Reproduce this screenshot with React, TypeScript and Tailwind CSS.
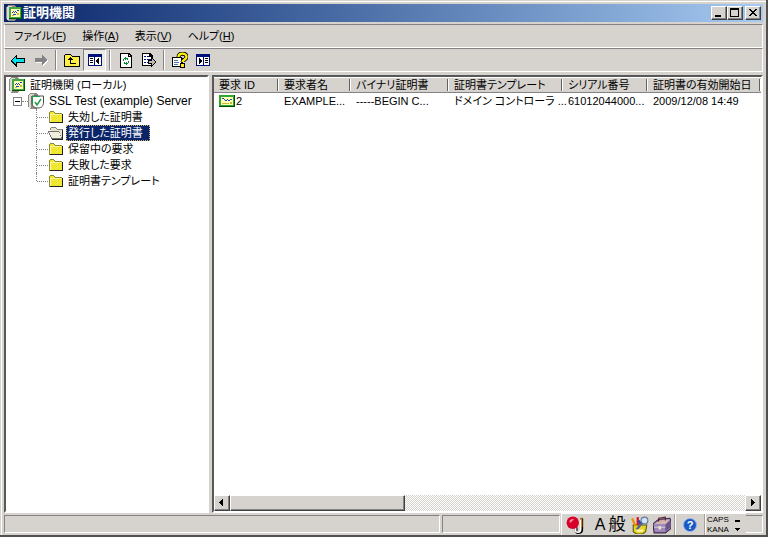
import type { ReactNode } from "react";

const raised =
  "border border-t-white border-l-white border-r-[#404040] border-b-[#404040] shadow-[inset_-1px_-1px_0_#848284]";
const sunken =
  "border-2 border-t-[#585858] border-l-[#585858] border-r-white border-b-white";

function Icon({ children, size = 16 }: { children: ReactNode; size?: number }) {
  return (
    <svg
      width={size}
      height={size}
      viewBox="0 0 16 16"
      shapeRendering="crispEdges"
      className="block shrink-0"
      aria-hidden="true"
    >
      {children}
    </svg>
  );
}

function AuthorityIcon() {
  return (
    <Icon>
      <path d="M0 2l2-2h6l2 2v12l-2 2H2l-2-2z" fill="#8c8a84" />
      <path d="M1 2l1-1h4v2H3v12H1z" fill="#dedbd6" />
      <path d="M3 2h13v12H3z" fill="#005900" />
      <path d="M3 2h12v11H3z" fill="#42a642" />
      <path d="M5 4h9v8H5z" fill="#ffffb5" />
      <path d="M6 7h1v1H6zM7 6h1v1H7zM8 7h1v1H8zM9 6h1v1H9zM11 5h2v1h-2zM10 7h1v1h-1zM7 9h3v1H7z" fill="#2145b5" />
      <path d="M6 10h2v1H6zM11 8h2v2h-2z" fill="#d6b531" />
    </Icon>
  );
}

function ServerIcon() {
  return (
    <Icon>
      <path d="M0 2l2-2h6l2 2v12l-2 2H2l-2-2z" fill="#8c8a84" />
      <path d="M1 2l1-1h4v2H3v12H1z" fill="#dedbd6" />
      <path
        d="M4 3h11.5v6c0 4-2 6-5.500 6S4 13 4 10z"
        fill="#fff"
        stroke="#4a4d4a"
        shapeRendering="auto"
      />
      <path d="M4 11V3h8" fill="none" stroke="#219a4a" />
      <path d="M7 9l2 3 4-6" fill="none" stroke="#219a42" strokeWidth="1.5" shapeRendering="auto" />
    </Icon>
  );
}

function FolderIcon({ open = false }: { open?: boolean }) {
  return (
    <Icon>
      {open ? (
        <>
          <path d="M2 3h1V2h5v1h1v1h6v10H5z" fill="#848284" />
          <path d="M3 3h5v1h1v1h5v7H3z" fill="#e7e3c6" />
          <path d="M0 6h11v1h1v3h1v2h1v2H3v-2H2v-2H1V8H0z" fill="#737173" />
          <path d="M1 7h10v1h1v3h1v2H4v-1H3v-2H2V8H1z" fill="#efefde" />
          <path d="M14 5h1v9h-1zM4 14h11v1H4z" fill="#212421" />
        </>
      ) : (
        <>
          <path d="M1 3h1V2h4v1h1v1h7v10H1z" fill="#8c8a39" />
          <path d="M2 3h4v1h1v1h7v8H2z" fill="#efe731" />
          <path d="M2 5h11v1H3v7H2z" fill="#fff7a5" />
          <path d="M14 5h1v9H2v-1h12z" fill="#212421" />
        </>
      )}
    </Icon>
  );
}

function CertificateIcon() {
  return (
    <Icon>
      <path d="M0 2h16v12H0z" fill="#004900" />
      <path d="M0 2h15v11H0z" fill="#31a631" />
      <path d="M2 4h12v8H2z" fill="#ffffb5" />
      <path d="M3 5h2v1H3zM5 6h1v1H5zM6 7h2v1H6zM8 6h1v1H8zM9 7h2v1H9zM11 6h2v1h-2z" fill="#2145b5" />
      <path d="M3 10h7v1H3zM11 9h2v2h-2z" fill="#d6b531" />
    </Icon>
  );
}

function BackIcon() {
  return (
    <Icon>
      <path d="M7 2v4h8v5H7v4H6v-1H5v-1H4v-1H3v-1H2v-1H1V8h1V7h1V6h1V5h1V4h1V3z" fill="#000" />
      <path d="M6 5v2h8v3H6v2H5v-1H4v-1H3V9H2V8h1V7h1V6h1V5z" fill="#00e3ef" />
    </Icon>
  );
}

function ForwardIcon() {
  return (
    <Icon>
      <path d="M10 4h1v1h1v1h1v1h1v1h1v2h-1v1h-1v1h-1v1h-1v1h-1v-3H3v-1h7z" fill="#fff" />
      <path d="M9 3h1v1h1v1h1v1h1v1h1v2h-1v1h-1v1h-1v1h-1v1H9v-3H2V6h7z" fill="#848284" />
    </Icon>
  );
}

function UpIcon() {
  return (
    <Icon>
      <path d="M1 2h6v1h1v1h8v11H0V3h1z" fill="#000" />
      <path d="M1 3h6v1h1v1h7v9H1z" fill="#ffef42" />
      <path d="M6 5h1v1h1v1h1v1H7v3h5v1H6V8H4V7h1V6h1z" fill="#000" />
    </Icon>
  );
}

function TreePaneIcon() {
  return (
    <Icon>
      <path d="M1 2h14v12H1z" fill="#00107b" />
      <path d="M2 5h5v8H2zM8 5h6v8H8z" fill="#fff" />
      <path d="M3 6h3v1H3zM3 8h3v1H3zM3 10h3v1H3z" fill="#000" />
      <path d="M12 6v6h-1v-1h-1v-1H9V8h1V7h1V6z" fill="#000" />
    </Icon>
  );
}

function ActionPaneIcon() {
  return (
    <Icon>
      <path d="M1 2h14v12H1z" fill="#00107b" />
      <path d="M2 5h6v8H2zM9 5h5v8H9z" fill="#fff" />
      <path d="M10 6h3v1h-3zM10 8h3v1h-3zM10 10h3v1h-3z" fill="#000" />
      <path d="M4 6h1v1h1v1h1v2H6v1H5v1H4z" fill="#000" />
    </Icon>
  );
}

function RefreshIcon() {
  return (
    <Icon>
      <path d="M2 1h9l3 3v12H2z" fill="#000" />
      <path d="M3 2h7v3h3v10H3z" fill="#fff" />
      <path d="M11 3h1v1h-1z" fill="#fff" />
      <path d="M8 5v1h2v2H9V7H8v1H7V7H6v2H5V7h1V6h1V5zM10 9h1v2h-1v1H9v1H8v-1H6v-2h1v1h1v-1h1v1h1z" fill="#008a31" />
    </Icon>
  );
}

function ExportIcon() {
  return (
    <Icon>
      <path d="M1 1h8l3 3v10H1z" fill="#000" />
      <path d="M2 2h6v3h3v8H2z" fill="#fff" />
      <path d="M3 4h2v1H3zM3 7h2v1H3zM3 10h2v1H3z" fill="#00107b" />
      <path d="M6 4h2v1H6zM6 7h4v1H6zM6 10h3v1H6z" fill="#00107b" />
      <path d="M10 5h1v1h1v1h1v1h1v1h1v2h-1v1h-1v1h-1v1h-1v1h-1v-3H7V8h3z" fill="#000" />
      <path d="M11 7v2H8v2h3v2h1v-1h1v-1h1V9h-1V8h-1V7z" fill="#bdbab5" />
    </Icon>
  );
}

function HelpIcon() {
  return (
    <Icon>
      <path d="M0 5h9l2 2v8H0z" fill="#000" />
      <path d="M1 6h8v8H1z" fill="#fff" />
      <path d="M2 8h4v1H2zM2 10h5v1H2zM2 12h4v1H2z" fill="#52759c" />
      <path
        d="M6.5 5c0-4.5 8-4.5 8 0 0 3-4 2.5-4 5"
        fill="none"
        stroke="#000"
        strokeWidth="4"
        shapeRendering="auto"
      />
      <path
        d="M6.5 5c0-4.5 8-4.5 8 0 0 3-4 2.5-4 5"
        fill="none"
        stroke="#ffef00"
        strokeWidth="2.4"
        shapeRendering="auto"
      />
      <path d="M8 11h5v5H8z" fill="#000" />
      <path d="M9 12h3v3H9z" fill="#ffef00" />
    </Icon>
  );
}

function ImeIcon() {
  return (
    <Icon size={18}>
      <g shapeRendering="auto">
        <path d="M9 10v3c0 2.5 5 2.5 5-1V2" fill="none" stroke="#000" strokeWidth="2.5" />
        <path d="M8.5 10v3c0 2 4.500 2 4.500-1V3" fill="none" stroke="#fff" strokeWidth="1.5" />
        <path d="M14 1v9" stroke="#ef8a10" />
        <circle cx="6" cy="6" r="5.5" fill="#d6002a" />
        <path d="M3 5c0-2 3-3 4-2L4 6z" fill="#ff8494" />
      </g>
    </Icon>
  );
}

function ImePadIcon() {
  return (
    <Icon size={18}>
      <g shapeRendering="auto">
        <path d="M2 8h12l-1 6-3 2H5l-3-2z" fill="#e7d329" stroke="#635d08" />
        <path d="M1 2l3 7" stroke="#e79200" strokeWidth="2" />
        <path d="M6 1v7" stroke="#d61021" strokeWidth="2" />
        <path d="M9 8L7 4" stroke="#2145b5" strokeWidth="2" />
        <circle cx="12" cy="4" r="3" fill="#cee3f7" stroke="#63799c" />
        <path d="M10 6l-5 6" stroke="#52658c" strokeWidth="2" />
        <path d="M5 13h6" stroke="#fff7a5" strokeWidth="2" />
      </g>
    </Icon>
  );
}

function ToolboxIcon() {
  return (
    <Icon size={18}>
      <g shapeRendering="auto">
        <path d="M0 7l5-4 10-1 1 3v6l-5 4H1z" fill="#9c8abd" stroke="#42294a" />
        <path d="M1 7l5-3 9-1-4 4z" fill="#d6b5ad" />
        <path d="M11 8l4-4v6l-4 4z" fill="#6b5184" />
        <path d="M5 5V2l6-1v3" fill="none" stroke="#632931" />
        <path d="M1 10h10" stroke="#d6c6de" />
        <path d="M5 9h2v3H5z" fill="#f7e7b5" />
      </g>
    </Icon>
  );
}

function CaptionGlyph({ d }: { d: string }) {
  return (
    <svg width="10" height="10" viewBox="0 0 10 10" shapeRendering="crispEdges" aria-hidden="true">
      <path d={d} fill="#000" />
    </svg>
  );
}

const captionButton = `flex h-[14px] w-4 items-center justify-center bg-[#d6d3ce] ${raised}`;

function TitleBar() {
  return (
    <header className="flex h-[18px] shrink-0 items-center bg-linear-to-r from-[#0a246a] to-[#a6caf0] px-[2px]">
      <AuthorityIcon />
      <h1 className="ml-px flex-1 text-[13px] font-bold text-white">証明機関</h1>
      <button className={captionButton} aria-label="最小化">
        <CaptionGlyph d="M1 7h6v2H1z" />
      </button>
      <button className={captionButton} aria-label="最大化">
        <CaptionGlyph d="M0 0h9v9H0zM1 2v6h7V2z" />
      </button>
      <button className={`ml-[2px] ${captionButton}`} aria-label="閉じる">
        <CaptionGlyph d="M1 1h2v1h1v1h2V2h1V1h2v1H8v1H7v1H6v1h1v1h1v1h1v1H7V7H6V6H4v1H3v1H1V7h1V6h1V5h1V4H3V3H2V2H1z" />
      </button>
    </header>
  );
}

const menus = [
  { label: "ファイル", accessKey: "F" },
  { label: "操作", accessKey: "A" },
  { label: "表示", accessKey: "V" },
  { label: "ヘルプ", accessKey: "H" },
];

const band =
  "flex h-6 shrink-0 items-center border border-t-[#848284] border-l-white border-r-white border-b-white pl-px";

function MenuBar() {
  return (
    <nav className={band}>
      {menus.map((menu) => (
        <button key={menu.label} className="px-2">
          {menu.label}(<span className="underline">{menu.accessKey}</span>)
        </button>
      ))}
    </nav>
  );
}

const toolGroups = [
  [
    { label: "戻る", icon: <BackIcon /> },
    { label: "進む", icon: <ForwardIcon /> },
  ],
  [
    { label: "1 つ上のレベル", icon: <UpIcon /> },
    { label: "コンソール ツリーの表示", icon: <TreePaneIcon />, pressed: true },
  ],
  [
    { label: "最新の情報に更新", icon: <RefreshIcon /> },
    { label: "一覧のエクスポート", icon: <ExportIcon /> },
  ],
  [
    { label: "ヘルプ", icon: <HelpIcon /> },
    { label: "操作ウィンドウの表示", icon: <ActionPaneIcon /> },
  ],
];

function Toolbar() {
  return (
    <div className={band} role="toolbar">
      {toolGroups.map((group, index) => (
        <div key={index} className="flex items-center">
          {index > 0 && <span className="mx-[3px] h-5 w-[2px] border-l border-[#848284] bg-white" />}
          {group.map((tool) => (
            <button
              key={tool.label}
              aria-label={tool.label}
              aria-pressed={tool.pressed}
              className={`flex h-[22px] w-[23px] items-center justify-center ${
                tool.pressed
                  ? "border border-t-[#848284] border-l-[#848284] border-r-white border-b-white bg-[#ebe9e6]"
                  : ""
              }`}
            >
              {tool.icon}
            </button>
          ))}
        </div>
      ))}
    </div>
  );
}

const folders = [
  { label: "失効した証明書" },
  { label: "発行した証明書", selected: true },
  { label: "保留中の要求" },
  { label: "失敗した要求" },
  { label: "証明書テンプレート" },
];

function TreePane() {
  return (
    <aside className={`w-[205px] shrink-0 overflow-hidden bg-white pl-[3px] ${sunken}`}>
      <button className="flex h-4 items-center gap-[5px]">
        <AuthorityIcon />
        証明機関 (ローカル)
      </button>
      <div className="flex h-4 items-center pl-1">
        <button
          aria-label="折りたたむ"
          className="flex size-[9px] items-center justify-center border border-[#848284]"
        >
          <span className="h-px w-[5px] bg-black" />
        </button>
        <span className="w-[6px] border-t border-dotted border-[#848284]" />
        <button className="flex items-center gap-[5px] text-[12px]">
          <ServerIcon />
          SSL Test (example) Server
        </button>
      </div>
      <ul className="pl-[27px]">
        {folders.map((folder, index) => (
          <li key={folder.label} className="flex h-4 items-center">
            <span
              className={`w-px self-start border-l border-dotted border-[#848284] ${
                index === folders.length - 1 ? "h-2" : "h-4"
              }`}
            />
            <span className="w-[11px] border-t border-dotted border-[#848284]" />
            <FolderIcon open={folder.selected} />
            <button
              className={`ml-[2px] h-4 border pr-[6px] pl-px leading-[14px] ${
                folder.selected
                  ? "border-dotted border-[#d6b56b] bg-[#0a246a] text-white"
                  : "border-transparent"
              }`}
            >
              {folder.label}
            </button>
          </li>
        ))}
      </ul>
    </aside>
  );
}

const columns = [
  { title: "要求 ID", width: "w-[65px]" },
  { title: "要求者名", width: "w-[72px]" },
  { title: "バイナリ証明書", width: "w-[98px]" },
  { title: "証明書テンプレート", width: "w-[114px]" },
  { title: "シリアル番号", width: "w-[85px]" },
  { title: "証明書の有効開始日", width: "" },
];

const row = ["2", "EXAMPLE...", "-----BEGIN C...", "ドメイン コントローラ ...", "61012044000...", "2009/12/08 14:49"];

function ScrollBar() {
  const arrow = `flex w-4 shrink-0 items-center justify-center bg-[#d6d3ce] ${raised}`;
  return (
    <div className="flex h-4 shrink-0 bg-[repeating-conic-gradient(#fff_0_25%,#d6d3ce_0_50%)] bg-[length:2px_2px]">
      <button className={arrow} aria-label="左へスクロール">
        <CaptionGlyph d="M6 1v7H5V7H4V6H3V5H2V4h1V3h1V2h1V1z" />
      </button>
      <div className={`w-[32%] bg-[#d6d3ce] ${raised}`} />
      <div className="flex-1" />
      <button className={arrow} aria-label="右へスクロール">
        <CaptionGlyph d="M3 1h1v1h1v1h1v1h1v1H6v1H5v1H4v1H3z" />
      </button>
    </div>
  );
}

function ListPane() {
  return (
    <main className={`flex min-w-0 flex-1 flex-col bg-white ${sunken}`}>
      <div className="min-h-0 flex-1 overflow-hidden">
        <table className="w-full table-fixed border-collapse text-left whitespace-nowrap">
          <thead>
            <tr className="h-4 bg-[#d6d3ce] shadow-[inset_0_1px_0_#fff,inset_0_-1px_0_#848284]">
              {columns.map((column) => (
                <th key={column.title} className={`p-0 font-normal ${column.width}`}>
                  <div className="flex h-4 items-center justify-between pl-[5px]">
                    {column.title}
                    <span className="h-3 w-[2px] border-l border-[#636163] bg-white" />
                  </div>
                </th>
              ))}
            </tr>
          </thead>
          <tbody>
            <tr className="h-4">
              {row.map((cell, index) => (
                <td key={cell} className="p-0 pl-[5px]">
                  <div className="flex h-4 items-center gap-px">
                    {index === 0 && <CertificateIcon />}
                    {cell}
                  </div>
                </td>
              ))}
            </tr>
          </tbody>
        </table>
      </div>
      <ScrollBar />
    </main>
  );
}

function LanguageBar() {
  return (
    <div className="absolute right-5 bottom-0 flex h-[22px] items-center border-t border-l border-white bg-[#d6d3ce] pl-1">
      <button aria-label="IME">
        <ImeIcon />
      </button>
      <button className="ml-[9px] w-[14px] text-[16px] leading-5">A</button>
      <button className="w-5 text-[17px] leading-5">般</button>
      <button className="ml-1" aria-label="IME パッド">
        <ImePadIcon />
      </button>
      <button className="ml-1" aria-label="ツール">
        <ToolboxIcon />
      </button>
      <span className="ml-[3px] h-full w-[2px] border-l border-[#a5a29c] bg-white" />
      <button
        className="mx-[7px] size-[14px] rounded-full border border-[#94b2e7] bg-[#1859c6] text-[11px] leading-3 font-bold text-white"
        aria-label="ヘルプ"
      >
        ?
      </button>
      <span className="h-full w-[2px] border-l border-[#a5a29c] bg-white" />
      <div className="flex w-[24px] flex-col pl-px text-[8px] leading-[10px]">
        <button className="text-left">CAPS</button>
        <button className="text-left">KANA</button>
      </div>
      <div className="flex w-4 flex-col items-center">
        <button aria-label="最小化">
          <CaptionGlyph d="M2 5h5v2H2z" />
        </button>
        <button aria-label="オプション">
          <CaptionGlyph d="M2 3h5v1H6v1H5v1H4V5H3V4H2z" />
        </button>
      </div>
    </div>
  );
}

function StatusBar() {
  const cell = "border border-t-[#848284] border-l-[#848284] border-r-white border-b-white";
  return (
    <footer className="mt-[2px] flex h-[18px] shrink-0 gap-[2px]">
      <div className={`flex-1 ${cell}`} />
      <div className={`w-[118px] ${cell}`} />
      <div className={`w-[201px] ${cell}`} />
    </footer>
  );
}

export default function App() {
  return (
    <div className="relative flex h-screen flex-col overflow-hidden border-r-2 border-b-2 border-[#505050] bg-[#d6d3ce] pt-1 pr-[3px] pb-[2px] pl-1 font-['Liberation_Sans','Noto_Sans_CJK_JP',sans-serif] text-[11px] leading-4 text-black shadow-[inset_1px_1px_0_#d6d3ce,inset_2px_2px_0_#fff] [font-feature-settings:'palt']">
      <TitleBar />
      <div className="mt-[2px] flex flex-col">
        <MenuBar />
        <Toolbar />
      </div>
      <div className="mt-[3px] flex min-h-0 flex-1 gap-[3px]">
        <TreePane />
        <ListPane />
      </div>
      <StatusBar />
      <LanguageBar />
    </div>
  );
}
